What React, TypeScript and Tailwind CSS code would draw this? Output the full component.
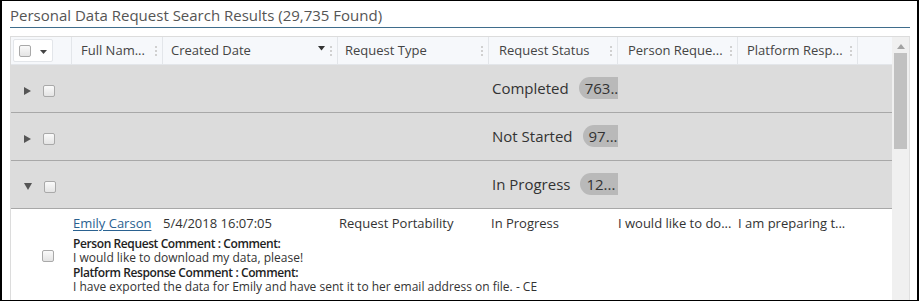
import React from "react";

const COLS = "grid-cols-[61px_91px_175px_151px_129px_120px_120px_1fr]";

function Box() {
  return (
    <span className="inline-block w-[12px] h-[12px] rounded-[2px] border border-[#a9a9a9] bg-gradient-to-b from-[#fafafa] to-[#e4e4e4]" />
  );
}

function HeadCell({ label, pl = "pl-[9px]", sort = false }: { label: string; pl?: string; sort?: boolean }) {
  return (
    <div className={`flex items-center border-r border-[#e3e6ea] ${pl} min-w-0`}>
      <span className="truncate">{label}</span>
      {sort && (
        <svg width="7" height="5" viewBox="0 0 7 5" className="ml-auto mr-[5px] mb-[5px]">
          <path d="M0 0 L7 0 L3.5 4.5 Z" fill="#333" />
        </svg>
      )}
      <span className={sort ? "mr-[5px]" : "ml-auto mr-[5px]"}>
        <span className="flex flex-col gap-[2px]">
          <span className="w-[2px] h-[2px] bg-[#d0d0d0]" />
          <span className="w-[2px] h-[2px] bg-[#d0d0d0]" />
          <span className="w-[2px] h-[2px] bg-[#d0d0d0]" />
        </span>
      </span>
    </div>
  );
}

function GroupRow({ label, count, open = false }: { label: string; count: string; open?: boolean }) {
  return (
    <div className={`grid ${COLS} h-[48px] bg-[#dcdcdc] border-b border-[#a8a8a8]`}>
      <div className="flex items-center pl-[13px] gap-[12px] pt-[4px]">
        {open ? (
          <svg width="8" height="7" viewBox="0 0 8 7">
            <path d="M0 0 L8 0 L4 7 Z" fill="#555" />
          </svg>
        ) : (
          <svg width="7" height="8" viewBox="0 0 7 8">
            <path d="M0 0 L7 4 L0 8 Z" fill="#555" />
          </svg>
        )}
        <Box />
      </div>
      <div />
      <div />
      <div />
      <div className="flex items-center pl-[3px] pb-[1px] overflow-hidden whitespace-nowrap text-[15px] text-[#333]">
        <span>{label}</span>
        <span className="ml-[10px] rounded-l-full bg-[#b9b9b9] pl-[6px] pr-[20px] h-[22px] flex items-center text-[15px]">{count}</span>
      </div>
      <div />
      <div />
      <div />
    </div>
  );
}

export default function App() {
  return (
    <div
      className="w-[919px] h-[301px] bg-white border-y border-x-2 border-black overflow-hidden text-[#333]"
      style={{ fontFamily: '"Open Sans", sans-serif' }}
    >
      <div className="pl-[8px] pr-[7px]">
        <div className="h-[27px] border-b border-[#3f6d8c] flex items-center pt-[3px]">
          <span className="text-[15px] text-[#555]">Personal Data Request Search Results (29,735 Found)</span>
        </div>
        <div className="mt-[8px] flex border-l border-t border-[#dcdcdc] h-[270px]">
          <div className="flex-1 min-w-0">
            <div className={`grid ${COLS} h-[28px] bg-[#f6f8fb] border-b border-[#e3e6ea] text-[13px] text-[#444]`}>
              <div className="flex items-center border-r border-[#e3e6ea] pl-[2px]">
                <div className="flex items-center h-[23px] w-[40px] border border-[#e3e6ea] rounded-[2px] bg-white">
                  <span className="pl-[5px] flex"><Box /></span>
                  <svg width="7" height="4" viewBox="0 0 7 4" className="ml-[9px] mt-[3px]">
                    <path d="M0 0 L7 0 L3.5 4 Z" fill="#444" />
                  </svg>
                </div>
              </div>
              <HeadCell label="Full Nam..." />
              <HeadCell label="Created Date" pl="pl-[8px]" sort />
              <HeadCell label="Request Type" pl="pl-[7px]" />
              <HeadCell label="Request Status" pl="pl-[10px]" />
              <HeadCell label="Person Reque..." pl="pl-[10px]" />
              <HeadCell label="Platform Resp..." pl="pl-[9px]" />
              <div />
            </div>
            <GroupRow label="Completed" count="763.." />
            <GroupRow label="Not Started" count="97..." />
            <GroupRow label="In Progress" count="12..." open />
            <div className={`grid ${COLS} text-[13px] text-[#333]`}>
              <div className="flex items-start pl-[31px] row-span-2 pt-[41px]">
                <Box />
              </div>
              <div className="pl-[1px] pt-[5px]">
                <span className="underline text-[#2a6190] decoration-[#2a6190] underline-offset-2">Emily Carson</span>
              </div>
              <div className="pt-[5px]">5/4/2018 16:07:05</div>
              <div className="pl-[1px] pt-[5px]">Request Portability</div>
              <div className="pl-[2px] pt-[5px]">In Progress</div>
              <div className="pt-[5px]">I would like to do...</div>
              <div className="pt-[5px]">I am preparing t...</div>
              <div />
              <div className="col-span-7 pl-[1px] pt-[3px] text-[12px] leading-[14.5px] whitespace-nowrap">
                <div className="font-semibold text-[#222] tracking-[-0.4px]">Person Request Comment : Comment:</div>
                <div>I would like to download my data, please!</div>
                <div className="font-semibold text-[#222] tracking-[-0.4px]">Platform Response Comment : Comment:</div>
                <div>I have exported the data for Emily and have sent it to her email address on file. - CE</div>
              </div>
            </div>
          </div>
          <div className="w-[18px] bg-[#f0f0f0] flex flex-col items-center border-r border-[#e0e0e0]">
            <svg width="8" height="5" viewBox="0 0 8 5" className="mt-[7px]">
              <path d="M0 5 L4 0 L8 5 Z" fill="#a3a3a3" />
            </svg>
            <div className="mt-[4px] w-[13px] h-[96px] bg-[#c1c1c1]" />
          </div>
        </div>
      </div>
    </div>
  );
}
